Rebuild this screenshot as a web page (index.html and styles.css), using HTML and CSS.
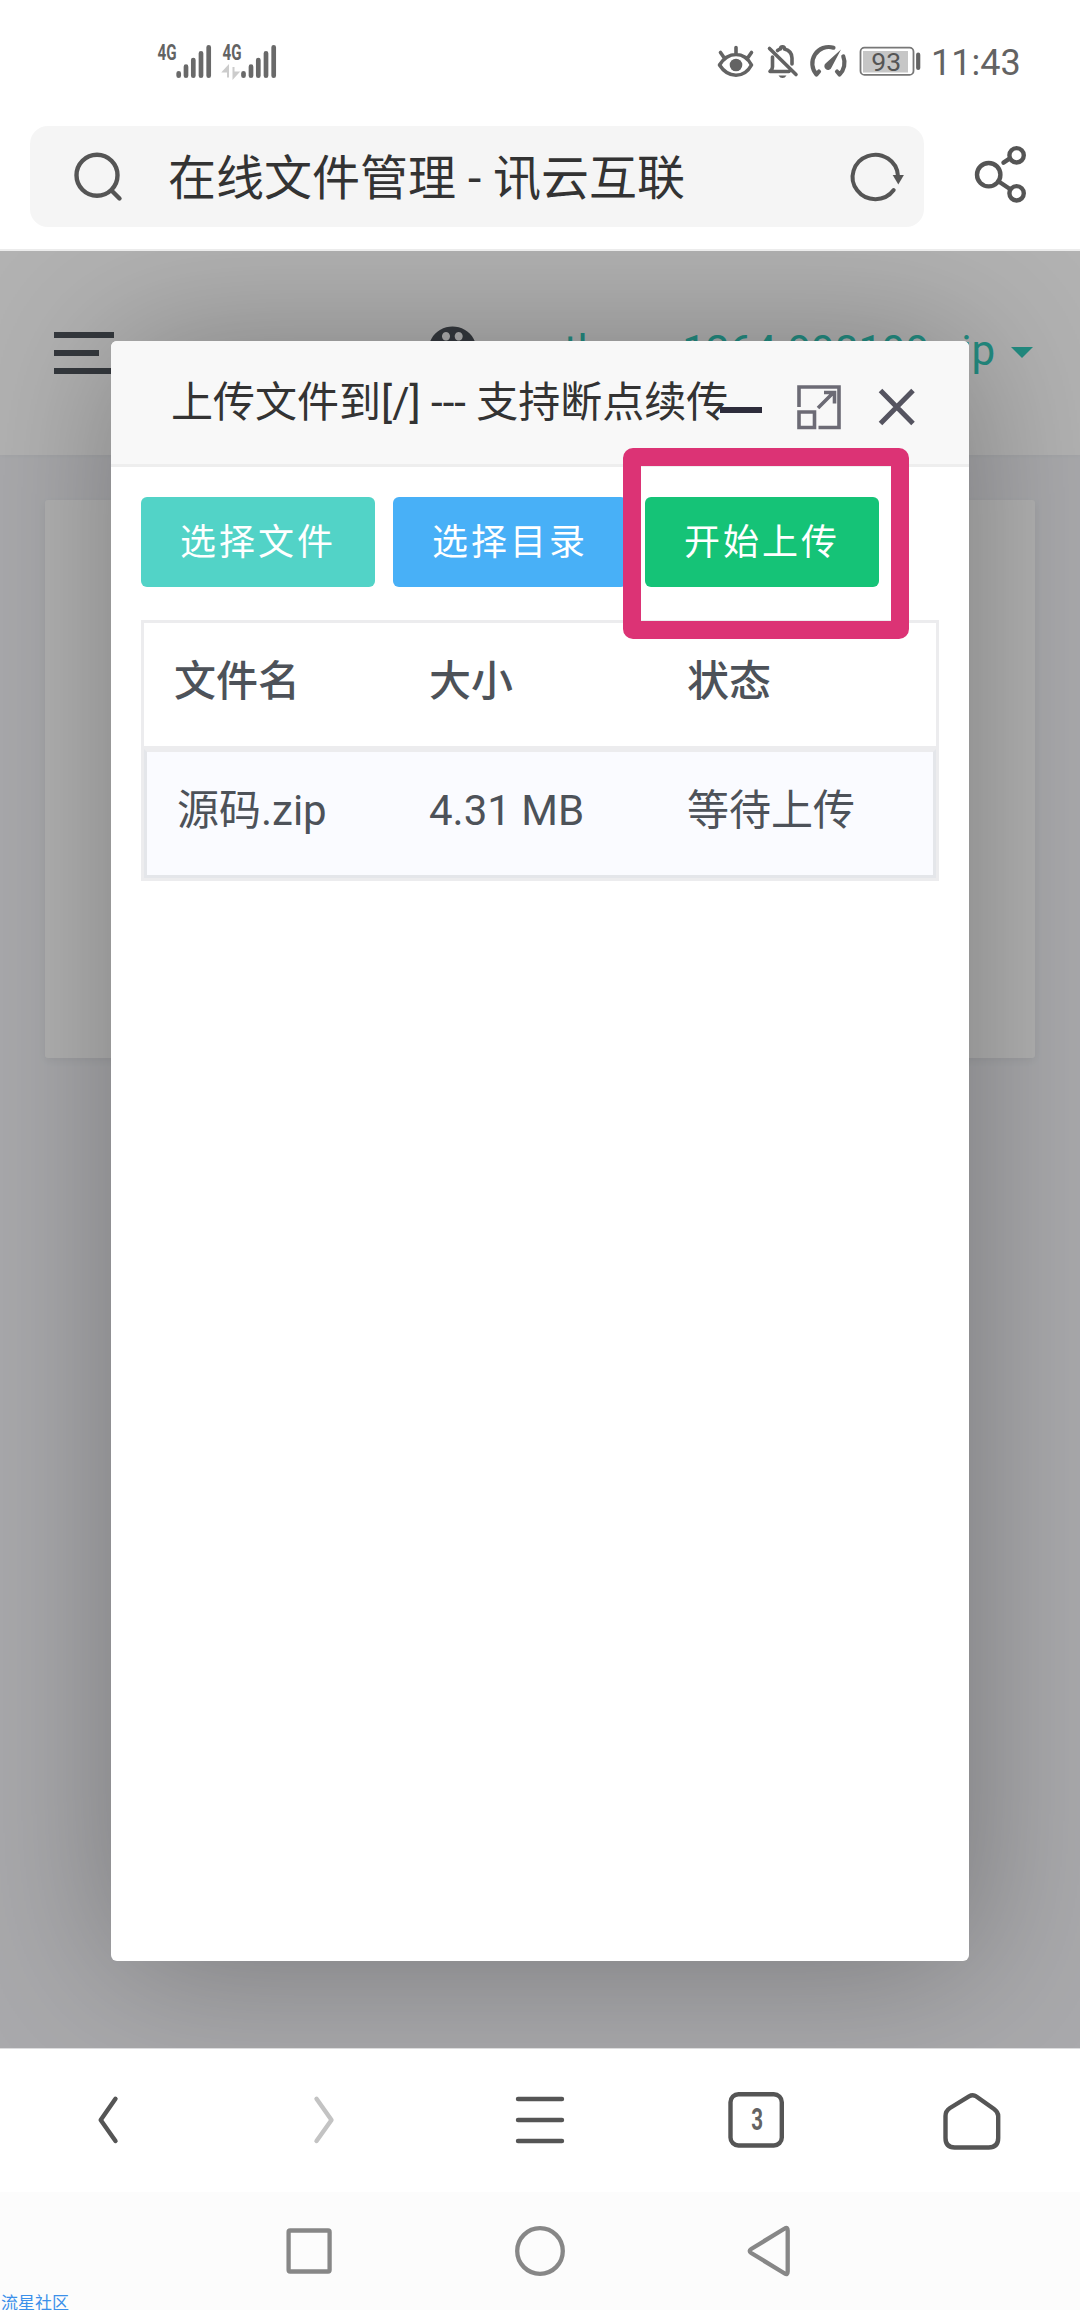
FILE: index.html
```html
<!DOCTYPE html>
<html lang="zh-CN">
<head>
<meta charset="utf-8">
<title>在线文件管理 - 讯云互联</title>
<link rel="stylesheet" href="styles.css">
</head>
<body>
<header class="status">
  <svg class="signal" viewBox="156 43 56 38" width="56" height="38">
    <text class="net" x="157.5" y="60" textLength="19" lengthAdjust="spacingAndGlyphs">4G</text>
    <path class="bars" d="M178.700 73.300v2.400M186 66.700v9M193.300 60v15.700M201 53.300v22.400M208.700 47.300v28.400"/>
  </svg>
  <svg class="signal second" viewBox="221 43 56 38" width="56" height="38">
    <text class="net" x="222.5" y="60" textLength="19" lengthAdjust="spacingAndGlyphs">4G</text>
    <path class="data" d="M223.500 71.500l4.500-5v11v-6zM233.500 67v10.500l4.500-5h-4.500z"/>
    <path class="bars" d="M243.500 73.300v2.400M251 66.700v9M258.300 60v15.700M266 53.300v22.400M273.700 47.300v28.400"/>
  </svg>
  <span class="spacer"></span>
  <svg class="sicon" viewBox="716 43 40 38" width="40" height="38">
    <path class="s36" d="M719.500 65Q726 54.500 736 54.500T751.500 65Q746 75.200 736 75.200T719.500 65zM736 47.500v6M720.500 52.500l3.500 5M751.500 52.500l-3.500 5"/>
    <circle class="solid" cx="736" cy="65" r="6.300"/>
  </svg>
  <svg class="sicon bell" viewBox="764 43 40 38" width="40" height="38">
    <path class="s36" d="M769.500 48.500l26.500 26M772.500 57v10q0 2.500-2.500 4.500h19M777.500 50.500q2-1.500 3-1.500c0-3 4-3 4 0q7.500 2 7.500 9v6"/>
    <path class="solid" d="M778.500 75.500h8q-1.500 2.500-4 2.500t-4-2.500z"/>
  </svg>
  <svg class="sicon gauge" viewBox="806 43 44 38" width="44" height="38">
    <path class="s40" d="M833.500 47.700A16.500 16.500 0 0 0 816.500 74.500L819 71.500M843.300 56.500A16.500 16.500 0 0 1 839.500 74.500L837 71.500"/>
    <path class="solid" d="M841 49.500l-9.500 18a3.700 3.700 0 1 1-6-4z"/>
  </svg>
  <svg class="sicon batt" viewBox="858 43 64 38" width="64" height="38">
    <rect class="cell" x="860.500" y="47.700" width="53" height="27.200" rx="4"/>
    <rect class="charge" x="863" y="51" width="45" height="21.500"/>
    <text class="pct" x="871.300" y="71">93</text>
    <path class="s40" d="M918.200 54.700v13.300"/>
  </svg>
  <time class="clock">11:43</time>
</header>

<div class="address">
  <div class="search">
    <svg viewBox="72 149 52 54" width="52" height="54"><path class="line" d="M112 190l7.500 7.500"/><circle class="line" cx="97" cy="174.200" r="20.500"/></svg>
    <span class="query">在线文件管理 - 讯云互联</span>
    <svg class="reload" viewBox="848 149 58 54" width="58" height="54"><path class="line thin" d="M898 175A22.700 22.200 0 1 0 893.700 189"/><path class="arrow" d="M892.700 174h11.200l-5.600 9.500z"/></svg>
  </div>
  <svg class="share" viewBox="973 144 56 60" width="56" height="60"><g class="line"><circle cx="988.700" cy="174.700" r="11.700"/><circle cx="1016.600" cy="155.300" r="7.200"/><circle cx="1016.600" cy="193.300" r="7.200"/><path d="M998.700 181.500l10.500 7M1003.500 162.700l6-4"/></g></svg>
</div>

<main class="page">
  <div class="topbar">
    <div class="burger"><i></i><i></i><i></i></div>
    <svg class="palette" viewBox="428 326 49 49" width="49" height="49"><path fill-rule="evenodd" d="M452.500 326.500a24.300 24.300 0 1 0 .01 0zM446 332a4 4.300 0 1 1-.01 0zM458.700 332a4 4.300 0 1 1-.01 0z"/></svg>
    <span class="user">theme1264.998199.zip</span>
    <i class="caret"></i>
  </div>
  <div class="card"></div>
  <div class="scrim"></div>

  <section class="dialog">
    <div class="dialog-head">
      <h1>上传文件到[/] --- 支持断点续传</h1>
      <div class="tools">
        <i class="min"></i>
        <svg viewBox="797 385 44 44" width="44" height="44"><path class="tool" d="M799 407v-20h40v40.500h-20.500M799 412h15.500v15.500H799zM818 408l15-15M824 392.500h10.500v11"/></svg>
        <svg class="close" viewBox="877 387 40 40" width="40" height="40"><path class="cross" d="M880.500 390.500l32.500 33M913 390.500l-32.500 33"/></svg>
      </div>
    </div>
    <div class="actions">
      <button class="btn cyan">选择文件</button>
      <button class="btn blue">选择目录</button>
      <button class="btn green">开始上传</button>
    </div>
    <div class="files">
      <div class="row head"><span>文件名</span><span>大小</span><span>状态</span></div>
      <div class="row item"><span>源码.zip</span><span>4.31 MB</span><span>等待上传</span></div>
    </div>
    <div class="marker"></div>
  </section>
</main>

<nav class="toolbar">
  <svg viewBox="78 2090 60 61" width="60" height="61"><path class="line" d="M115.500 2098.700L100.700 2120l14.800 21"/></svg>
  <svg viewBox="294 2090 60 61" width="60" height="61"><path class="line off" d="M316.500 2098.700L331.500 2120l-15 21"/></svg>
  <svg viewBox="510 2090 60 61" width="60" height="61"><path class="line" d="M518 2099h44M518 2120h44M518 2141h44"/></svg>
  <svg viewBox="726 2090 60 61" width="60" height="61"><rect class="line" x="730.500" y="2094.200" width="51.300" height="51.300" rx="8"/><text class="count" x="751.300" y="2130" textLength="11.800" lengthAdjust="spacingAndGlyphs">3</text></svg>
  <svg viewBox="942 2090 60 61" width="60" height="61"><path class="line" d="M969 2096.300q4-2.300 7 0l18 12.700q4.200 3 4.200 7v22q0 9.500-9.500 9.500h-34q-9.200 0-9.200-9.500v-22q0-5 4.500-8z"/></svg>
</nav>
<footer class="sysnav">
  <svg viewBox="280 2221 60 60" width="60" height="60"><rect class="sys" x="288.600" y="2230.500" width="41" height="41" rx="1.500"/></svg>
  <svg viewBox="510 2221 60 60" width="60" height="60"><circle class="sys" cx="540" cy="2251" r="22.800"/></svg>
  <svg viewBox="740 2221 60 60" width="60" height="60"><path class="sys" d="M787.700 2230.500v41q0 4-3 2l-33.500-20.500q-3-2 0-4l33.500-20.500q3-2 3 2z"/></svg>
  <span class="credit">流星社区</span>
</footer>
</body>
</html>
```
FILE: styles.css
```css
* { box-sizing: border-box; }
body {
  margin: 0;
  width: 1080px;
  height: 2310px;
  overflow: hidden;
  display: flex;
  flex-direction: column;
  background: #fff;
  font-family: Roboto, "Noto Sans CJK SC", sans-serif;
}
svg { display: block; flex: none; overflow: visible; }
i { display: block; }

/* status bar */
.status { height: 126px; flex: none; display: flex; align-items: flex-start; padding: 43px 60px 0 156px; }
.second { margin-left: 9px; }
.spacer { flex: 1; }
.net { font: 700 21.500px Roboto, sans-serif; fill: #636363; }
.bars { stroke: #696969; stroke-width: 4.700; stroke-linecap: round; }
.data { fill: #ccc; stroke: #ccc; stroke-width: 2; }
.s36, .s40 { fill: none; stroke: #636363; stroke-width: 3.600; stroke-linecap: round; stroke-linejoin: round; }
.s40 { stroke-width: 4.200; }
.solid { fill: #636363; }
.bell { margin-left: 8px; }
.gauge { margin-left: 2px; }
.batt { margin-left: 8px; }
.cell { fill: #fff; stroke: #777; stroke-width: 1.800; }
.charge { fill: #c6c6c6; }
.pct { font: 400 26.500px Roboto, sans-serif; fill: #555; }
.clock { margin: 1px 0 0 9px; width: 89px; font-size: 36px; line-height: 38px; color: #636363; white-space: nowrap; }

/* address bar */
.address { height: 125px; flex: none; display: flex; align-items: flex-start; padding: 0 51px 0 30px; justify-content: space-between; border-bottom: 2px solid #ececec; }
.search { width: 894px; height: 101px; border-radius: 18px; background: #f5f5f5; display: flex; align-items: center; padding: 0 18px 0 42px; }
.query { flex: 1; margin-left: 44px; padding-top: 5px; font-size: 48px; line-height: 60px; color: #333; white-space: nowrap; }
.line { fill: none; stroke: #555; stroke-width: 4.400; stroke-linecap: round; stroke-linejoin: round; }
.thin { stroke-width: 4; }
.arrow { fill: #555; }
.share { margin-top: 18px; }

/* web page below the browser chrome */
.page { position: relative; height: 1797px; flex: none; overflow: hidden; background: #f2f3f7; }
.topbar { height: 204px; background: #fff; display: flex; align-items: flex-start; padding-left: 54px; box-shadow: 0 0 6px rgba(0,0,0,.05); }
.burger { width: 60px; margin-top: 81px; display: flex; flex-direction: column; gap: 12px; }
.burger i { height: 6px; background: #4d5259; }
.burger i:nth-child(2) { width: 45px; }
.palette { margin: 75px 0 0 314px; fill: #4d5259; }
.user { margin-top: 75px; width: 518px; text-align: right; font-size: 42px; line-height: 50px; color: #33cabb; white-space: nowrap; }
.caret { margin: 96px 0 0 16px; border: 11.500px solid transparent; border-top-color: #33cabb; border-bottom: 0; }
.card { height: 558px; margin: 45px 45px 0; background: #fff; border-radius: 3px; box-shadow: 0 3px 9px rgba(0,0,0,.06); }
.scrim { position: absolute; inset: 0; background: rgba(0,0,0,.3); }

/* upload dialog */
.dialog { position: absolute; left: 111px; top: 90px; width: 858px; height: 1620px; background: #fff; border-radius: 6px; box-shadow: 3px 3px 150px rgba(0,0,0,.3); }
.dialog-head { height: 126px; display: flex; align-items: flex-start; background: #f8f8f8; border-bottom: 3px solid #eee; border-radius: 6px 6px 0 0; padding-left: 60px; }
.dialog-head h1 { margin: 32px 0 0; width: 549px; font-size: 42px; font-weight: 400; line-height: 60px; color: #333; white-space: nowrap; }
.tools { display: flex; padding-top: 44px; }
.min { position: relative; width: 42px; height: 6px; margin: 22px 35px 0 0; background: #2e2d3c; }
.tool, .cross { fill: none; stroke: #6c6b75; stroke-width: 3.600; }
.cross { stroke: #555460; stroke-width: 5; }
.close { margin: 2px 0 0 36px; }
.actions { display: flex; gap: 18px; padding: 30px 0 0 30px; }
.btn { width: 234px; height: 90px; padding: 2px 0 0; border: 0; border-radius: 6px; font: 400 36px/54px Roboto, "Noto Sans CJK SC", sans-serif; letter-spacing: 3px; color: #fff; }
.cyan { background: #52d3c7; }
.blue { background: #48b0f7; }
.green { background: #15c377; }
.files { margin: 33px 30px 0; border: 3px solid #ececee; }
.row { display: grid; grid-template-columns: 255px 258px 1fr; align-items: center; height: 126px; padding: 0 0 5px 30px; font-size: 42px; line-height: 60px; color: #4d5259; white-space: nowrap; }
.head { font-weight: 500; border-bottom: 3px solid #ececee; }
.item { height: 129px; padding-bottom: 6px; background: #fafbff; border: 3px solid #e4e6ea; border-top-color: #ececee; grid-template-columns: 252px 258px 1fr; }
.marker { position: absolute; left: 512px; top: 107px; width: 286px; height: 191px; border: 18px solid #dc3375; border-radius: 10px; }

/* browser toolbar and system navigation */
.toolbar { height: 144px; flex: none; border-top: 1px solid #dcdcde; display: grid; grid-template-columns: repeat(5, 216px); justify-items: center; align-items: center; }
.off { stroke: #c3c3c3; }
.count { font: 700 31px Roboto, sans-serif; fill: #636363; }
.sysnav { position: relative; flex: 1; background: #fcfcfc; display: grid; grid-template-columns: repeat(3, 230px); justify-content: center; justify-items: center; align-items: center; }
.sys { fill: none; stroke: #878787; stroke-width: 4.300; }
.credit { position: absolute; left: 1px; bottom: -5px; font-size: 17px; line-height: 24px; color: #3b90ea; }
```
